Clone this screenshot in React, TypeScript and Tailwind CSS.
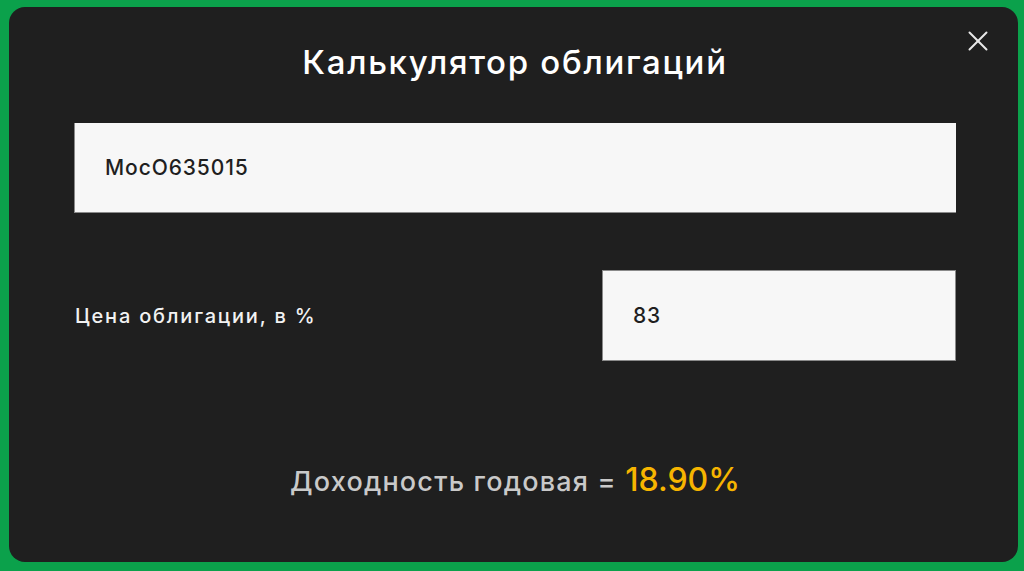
import { X } from "lucide-react";

export default function App() {
  return (
    <div className="w-[1024px] h-[571px] bg-[#0ba14b] pt-[7px] pl-[9px] pr-[6px] font-['Inter',sans-serif]">
      <div className="relative h-[555px] rounded-[16px] bg-[#1f1f1f] pl-[65px] pr-[62px] pt-[35px]">
        <button type="button" className="absolute right-[23px] top-[17px] flex text-[#e8e8e8]">
          <X size={34} strokeWidth={1.4} />
        </button>
        <h1 className="text-center text-[33px] leading-[40px] font-medium text-white tracking-[1.7px]">
          Калькулятор облигаций
        </h1>
        <div className="mt-[41px] h-[90px] bg-[#f7f7f7] border-l border-b border-[#8a8a8a] flex items-center pl-[30px] text-[21px] font-medium tracking-[0.9px] text-[#1f1f1f]">
          MocO635015
        </div>
        <div className="mt-[57px] flex items-center justify-between">
          <span className="text-[20px] font-medium text-[#f2f2f2] pl-px tracking-[1.8px]">Цена облигации, в %</span>
          <div className="w-[354px] h-[91px] bg-[#f7f7f7] border border-[#8a8a8a] flex items-center pl-[30px] text-[21px] font-medium tracking-[0.8px] text-[#1f1f1f]">
            83
          </div>
        </div>
        <div className="mt-[95px] text-center text-[27px] font-medium tracking-[1.2px] text-[#c9c9c9]">
          Доходность годовая ={" "}
          <span className="text-[32px] tracking-normal font-medium text-[#f7b500]">18.90%</span>
        </div>
      </div>
    </div>
  );
}
